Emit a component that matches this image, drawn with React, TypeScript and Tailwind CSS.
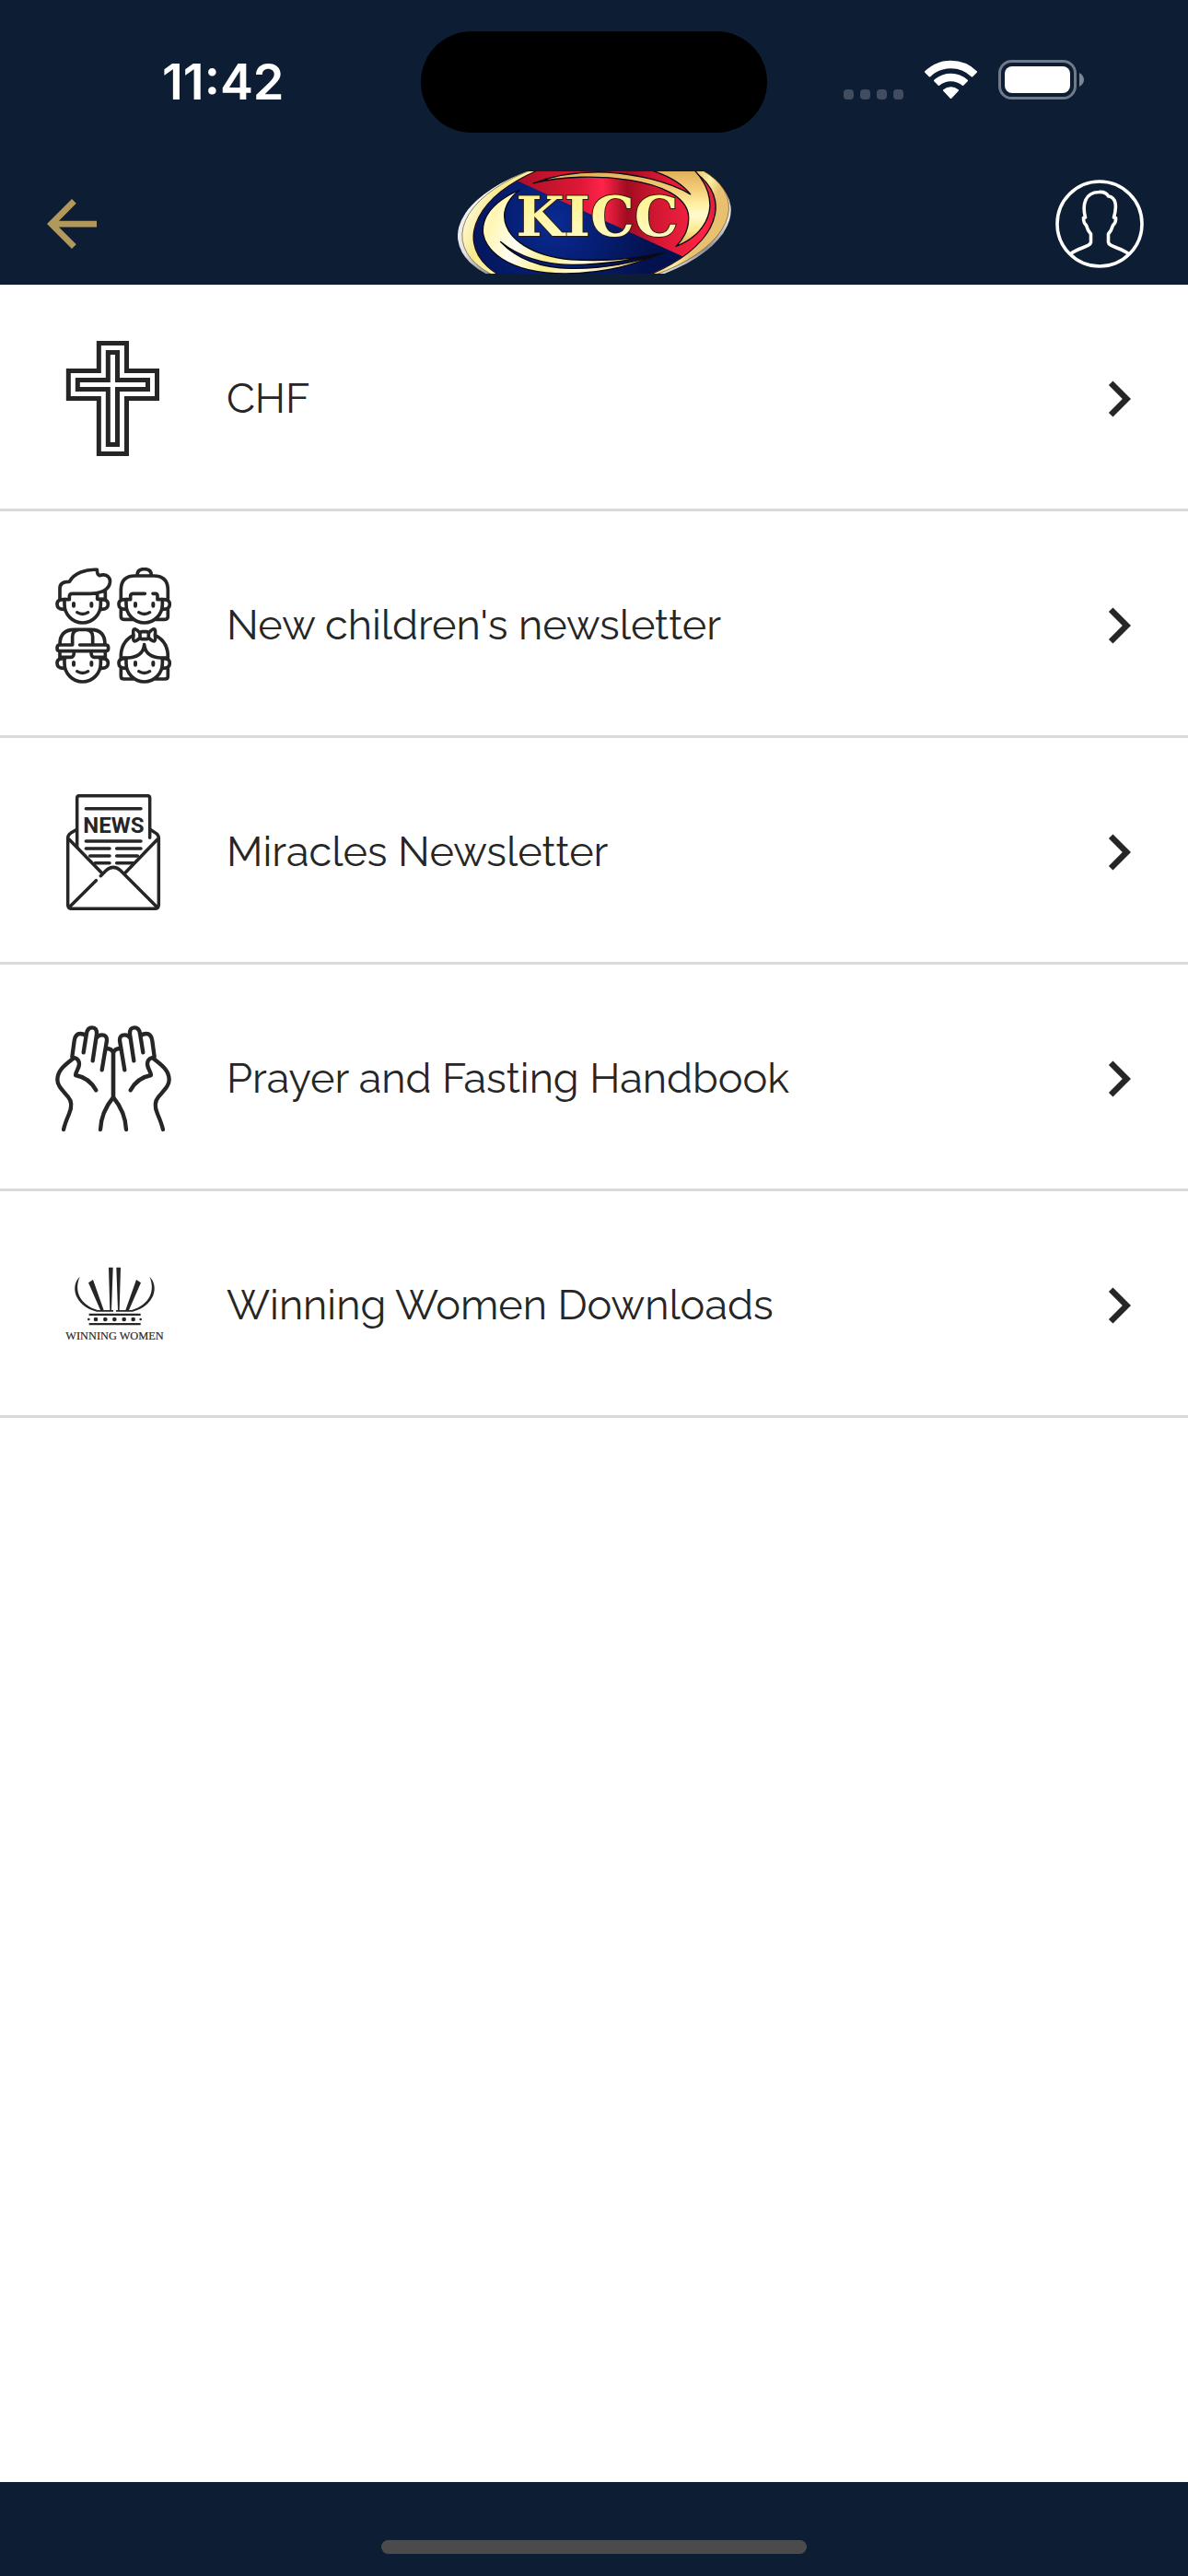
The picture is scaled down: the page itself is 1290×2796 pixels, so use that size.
import type { ReactNode } from "react";

const INK = "#262626";

function WifiIcon() {
  return (
    <svg viewBox="0 0 57 42" className="h-[42px] w-[57px]" fill="#fff" stroke="#fff" strokeLinejoin="round" aria-label="Wi-Fi">
      <path d="M1 13A39.500 39.500 0 0 1 56 13L51.500 17.500A33 33 0 0 0 5.500 17.500Z" strokeWidth="2" />
      <path d="M11 22.500A26 26 0 0 1 46 22.500L41.500 27A20 20 0 0 0 15.500 27Z" strokeWidth="2" />
      <path d="M21 33A12 12 0 0 1 36 33L28.500 41Z" strokeWidth="2" />
    </svg>
  );
}

function BatteryIcon() {
  return (
    <svg viewBox="0 0 93 43" className="h-[43px] w-[93px]" aria-label="Battery">
      <rect x="1.500" y="1.500" width="82" height="40" rx="13" fill="none" stroke="#707a88" strokeWidth="3" />
      <rect x="7" y="7" width="71" height="29" rx="8" fill="#fff" />
      <path d="M88 14Q93 17 93 21.500Q93 26 88 29Z" fill="#7d8693" />
    </svg>
  );
}

function ProfileIcon() {
  return (
    <svg viewBox="0 0 96 96" className="size-24" fill="none" stroke="#fff" strokeWidth="3.600" strokeLinejoin="round">
      <circle cx="48" cy="48" r="46" />
      <path d="M16 81C24 74 38 73 38.500 68V59Q35 55 33.500 49.500Q30.500 47 30.500 41.500L32.500 41C29 27 32 14 47 13.500C53 13 56 15 57.500 18C66 19 67 29 63.500 41L65.500 41.500Q66 47 62.500 49.500Q61 55 57.500 59V68C58 73 72 74 80 81" />
    </svg>
  );
}

function Logo() {
  return (
    <svg viewBox="80 47 893 334" className="mb-[3px] h-[111px] w-[297px]" role="img" aria-label="KICC">
      <defs>
        <linearGradient id="ring" x1="0" y1="0" x2="1" y2="0.300">
          <stop offset="0" stopColor="#fff6b0" />
          <stop offset="0.080" stopColor="#fffdf0" />
          <stop offset="0.200" stopColor="#f7e98a" />
          <stop offset="0.350" stopColor="#fff8c8" />
          <stop offset="0.700" stopColor="#e0b060" />
          <stop offset="0.850" stopColor="#dba850" />
          <stop offset="0.950" stopColor="#fdf3a8" />
          <stop offset="1" stopColor="#e8c070" />
        </linearGradient>
        <linearGradient id="silver" x1="0" y1="0" x2="0" y2="1">
          <stop offset="0" stopColor="#ffffff" />
          <stop offset="0.600" stopColor="#e4e4e8" />
          <stop offset="0.800" stopColor="#8d8f98" />
          <stop offset="1" stopColor="#ffffff" />
        </linearGradient>
        <linearGradient id="red" x1="0" y1="0" x2="1" y2="0">
          <stop offset="0.200" stopColor="#a80f24" />
          <stop offset="0.450" stopColor="#e01835" />
          <stop offset="0.530" stopColor="#ff2448" />
          <stop offset="0.620" stopColor="#a00c20" />
          <stop offset="0.720" stopColor="#d01631" />
          <stop offset="0.900" stopColor="#ff2446" />
          <stop offset="1" stopColor="#b01027" />
        </linearGradient>
        <radialGradient id="blue" gradientUnits="userSpaceOnUse" cx="390" cy="215" r="330">
          <stop offset="0" stopColor="#0a2b92" />
          <stop offset="0.400" stopColor="#062079" />
          <stop offset="1" stopColor="#03124f" />
        </radialGradient>
        <linearGradient id="sweepLeft" x1="0" y1="0" x2="1" y2="0.200">
          <stop offset="0" stopColor="#fffef0" />
          <stop offset="0.120" stopColor="#fff6b4" />
          <stop offset="0.300" stopColor="#fffff4" />
          <stop offset="0.500" stopColor="#fbee8e" />
          <stop offset="0.700" stopColor="#fffde0" />
          <stop offset="1" stopColor="#e7cc6c" />
        </linearGradient>
        <linearGradient id="sweepRight" x1="0" y1="0" x2="0" y2="1">
          <stop offset="0" stopColor="#dfae55" />
          <stop offset="0.250" stopColor="#f3cb78" />
          <stop offset="0.450" stopColor="#fff0a0" />
          <stop offset="0.600" stopColor="#fffbd0" />
          <stop offset="0.800" stopColor="#fbe98c" />
          <stop offset="1" stopColor="#d9a74c" />
        </linearGradient>
        <linearGradient id="letters" x1="0" y1="0" x2="0" y2="1">
          <stop offset="0" stopColor="#fff27e" />
          <stop offset="1" stopColor="#fffad0" />
        </linearGradient>
        <clipPath id="disc">
          <ellipse cx="527" cy="213" rx="398" ry="214" transform="rotate(-10 527 213)" />
        </clipPath>
      </defs>
      <ellipse cx="526" cy="216" rx="449" ry="216" transform="rotate(-7 526 216)" fill="url(#silver)" />
      <ellipse cx="530" cy="211" rx="439" ry="216" transform="rotate(-8 530 211)" fill="url(#ring)" stroke="#6b5420" strokeWidth="2" />
      <ellipse cx="527" cy="213" rx="402" ry="217" transform="rotate(-10 527 213)" fill="#0a0a12" />
      <g clipPath="url(#disc)">
        <rect x="80" y="0" width="893" height="430" fill="url(#red)" />
        <path d="M80 -11L973 397V440H80Z" fill="url(#blue)" />
      </g>
      <g stroke="#0a0812" strokeWidth="4" strokeLinejoin="round">
        <path
          d="M282 108C250 120 162 165 162 240C162 300 240 381 430 381C570 379 660 350 752 314C660 345 560 366 450 364C340 362 270 330 220 277C275 322 350 350 450 352C560 353 660 335 752 314C650 335 540 341 450 335C330 325 232 270 232 190C234 160 250 132 282 108Z"
          fill="url(#sweepLeft)"
        />
        <path
          d="M327 86C400 58 480 46 570 50C660 56 770 80 840 122C815 90 770 60 700 40H850C885 75 904 115 904 160C900 225 850 270 793 292C825 260 838 225 833 185C822 130 750 92 640 75C540 60 420 62 327 86Z"
          fill="url(#sweepRight)"
        />
      </g>
      <text
        x="271"
        y="257"
        fontFamily="'DejaVu Serif', serif"
        fontWeight="700"
        fontSize="181"
        fill="url(#letters)"
        stroke="#2a1c10"
        strokeWidth="6"
        paintOrder="stroke"
      >
        KICC
      </text>
    </svg>
  );
}

function CrossIcon() {
  return (
    <svg viewBox="30 57 378 378" className="size-[126px]" fill="none" stroke={INK} strokeWidth="15">
      <path d="M172 64.500H262.500V154.500H361.500V244.500H262.500V424.500H172V244.500H73V154.500H172Z" />
      <path d="M202 94.500H232.500V184.500H331.500V214.500H232.500V394.500H202V214.500H103V184.500H202Z" />
    </svg>
  );
}

function Face({ x, y }: { x: number; y: number }) {
  return (
    <g transform={`translate(${x} ${y})`}>
      <path d="M-57 -14Q-83 -16 -83 1Q-83 18 -61 18M57 -14Q83 -16 83 1Q83 18 61 18M-59 -12V2A59 60 0 0 0 59 2V-12" />
      <path d="M-29 -1V7M29 -1V7" strokeWidth="12" />
      <path d="M-18 28Q0 39 18 28" strokeWidth="10" />
    </g>
  );
}

function ChildrenIcon() {
  return (
    <svg viewBox="30 45 378 378" className="size-[126px]" fill="none" stroke={INK} strokeWidth="11" strokeLinecap="round" strokeLinejoin="round">
      <Face x={119} y={163} />
      <path d="M45 146V112Q45 91 76 91C92 62 130 50 166 52Q166 68 174 71C200 62 214 80 206 102C198 122 170 130 145 130H86Q76 130 76 139V149H60M193 120V148H167V132" />
      <Face x={320} y={163} />
      <path d="M297 70Q297 50 320 50Q343 50 343 70M244 147V118Q244 72 290 72H350Q397 72 397 118V147M262 149H275V138Q275 130 284 130H322M348 130H357Q363 130 363 138V149H378M244 183V204Q244 214 254 214H284M397 183V204Q397 214 387 214H357" />
      <Face x={119} y={355} />
      <path d="M45 295Q45 247 93 247H145Q192 247 192 295M86 296V270Q87 250 104 248M152 296V270Q151 250 134 248M86 297H44Q36 297 36 307Q36 317 44 317H195Q203 317 203 307Q203 297 195 297H110M45 320V340M193 320V340M50 337H81Q91 337 91 322M188 337H157Q147 337 147 322" />
      <Face x={320} y={355} />
      <path d="M244 340Q242 288 284 266M397 340Q399 288 356 266M320 296C318 325 295 340 262 339H246M320 296C322 325 345 340 378 339H395M244 375V398Q244 408 254 408H284M397 375V398Q397 408 387 408H357M305 257C286 236 282 246 285 265C282 286 286 292 305 275M335 257C354 236 358 246 355 265C358 286 354 292 335 275" />
      <rect x="306" y="254" width="28" height="24" rx="7" />
    </svg>
  );
}

function NewsletterIcon() {
  return (
    <svg viewBox="30 63 378 378" className="size-[126px]" fill="none" stroke={INK} strokeWidth="10.500" strokeLinecap="round" strokeLinejoin="round">
      <path d="M101 236V76Q101 68 109 68H330Q338 68 338 76V205" />
      <path d="M130 110H309M130 216H309M130 240H207M230 240H309M143 264H207M230 264H298M160 287H207M230 287H286" />
      <path d="M98 179L80 190Q71 196 71 206V422Q71 436 85 436H353Q367 436 367 422V206Q367 196 358 190L341 179M75 210L183 321M363 210L256 321M178 329L195 312Q219 290 243 312L362 431M163 344L77 430" />
      <text x="121" y="190" fontFamily="Roboto, sans-serif" fontWeight="700" fontSize="72" fill={INK} stroke="none">
        NEWS
      </text>
    </svg>
  );
}

const HAND =
  "M57 405Q62 384 75 354Q90 320 72 299C52 275 37 262 37 243C37 210 66 192 92 171Q108 176 108 192C107 208 98 212 96 228Q140 236 163 277M85 168L92 116Q95 93 112 93Q121 93 130 99M122 154L132 92Q135 73 150 73Q166 73 165 94L152 181M165 106Q170 97 182 97Q199 97 198 115L182 211M195 141Q213 140 219 155V300C196 328 179 360 177 405";

function HandsIcon() {
  return (
    <svg viewBox="30 51 378 378" className="size-[126px]" fill="none" stroke={INK} strokeWidth="13" strokeLinecap="round" strokeLinejoin="round">
      <path d={HAND} />
      <path d={HAND} transform="translate(438 0) scale(-1 1)" />
    </svg>
  );
}

const CROWN_HALF =
  "M110 104C78 135 92 198 165 218H219V213H213L218 74H204L208 213H188L153 114L138 124L177 213H168C110 195 90 150 110 104Z";

function CrownIcon() {
  return (
    <svg viewBox="30 9 378 378" className="size-[126px]" fill={INK}>
      <path d={CROWN_HALF} />
      <path d={CROWN_HALF} transform="translate(447 0) scale(-1 1)" />
      <path d="M140 224H308V231H140ZM140 255H308V262H140Z" />
      {[162, 193, 223, 254, 284].map((cx) => (
        <circle key={cx} cx={cx} cy="243" r="7" />
      ))}
      <circle cx="139" cy="243" r="4" />
      <circle cx="308" cy="243" r="4" />
      <text x="64" y="309" fontFamily="'Liberation Serif', serif" fontSize="37" stroke={INK} strokeWidth="0.500">
        WINNING WOMEN
      </text>
    </svg>
  );
}

const ITEMS: { label: string; icon: ReactNode }[] = [
  { label: "CHF", icon: <CrossIcon /> },
  { label: "New children's newsletter", icon: <ChildrenIcon /> },
  { label: "Miracles Newsletter", icon: <NewsletterIcon /> },
  { label: "Prayer and Fasting Handbook", icon: <HandsIcon /> },
  { label: "Winning Women Downloads", icon: <CrownIcon /> },
];

export default function App() {
  return (
    <div className="flex min-h-screen flex-col bg-white font-[Raleway,Lato,sans-serif] text-[#262626]">
      <header className="bg-[#0d1d33]">
        <div className="grid grid-cols-[1fr_376px_1fr] items-center pt-[34px] pb-[33px]">
          <time className="pl-[176px] font-[Inter,sans-serif] text-[54px] leading-none font-semibold text-white">11:42</time>
          <div className="h-[110px] rounded-full bg-black" />
          <div className="flex items-center justify-end gap-[23px] pr-[113px] pb-[6px]">
            <div className="flex gap-[7px] self-end">
              <span className="size-[11px] rounded-[4px] bg-[#414d5f]" />
              <span className="size-[11px] rounded-[4px] bg-[#414d5f]" />
              <span className="size-[11px] rounded-[4px] bg-[#414d5f]" />
              <span className="size-[11px] rounded-[4px] bg-[#414d5f]" />
            </div>
            <WifiIcon />
            <BatteryIcon />
          </div>
        </div>
        <nav className="grid h-[132px] grid-cols-[1fr_auto_1fr] items-center px-12">
          <button type="button" aria-label="Back" className="justify-self-start px-[3px]">
            <svg viewBox="4 4 16 16" className="size-[54px]" fill="#b3985b">
              <path d="M20 11H7.830l5.590-5.590L12 4l-8 8 8 8 1.410-1.410L7.830 13H20v-2z" />
            </svg>
          </button>
          <Logo />
          <button type="button" aria-label="Profile" className="justify-self-end">
            <ProfileIcon />
          </button>
        </nav>
      </header>

      <main className="flex-1">
        <ul>
          {ITEMS.map(({ label, icon }) => (
            <li key={label} className="border-b-3 border-[#dadada]">
              <a href="#" className="flex h-[243px] items-center pt-1 pr-9 pl-[60px]">
                {icon}
                <span className="flex-1 pl-[60px] text-[45px]">{label}</span>
                <svg viewBox="0 0 24 24" className="size-[78px]" fill={INK}>
                  <path d="M10 6L8.590 7.410 13.170 12l-4.580 4.590L10 18l6-6z" />
                </svg>
              </a>
            </li>
          ))}
        </ul>
      </main>

      <footer className="flex h-[102px] items-end justify-center bg-[#0d1d33] pb-6">
        <div className="h-[15px] w-[462px] rounded-full bg-[#4b4b4b]" />
      </footer>
    </div>
  );
}
